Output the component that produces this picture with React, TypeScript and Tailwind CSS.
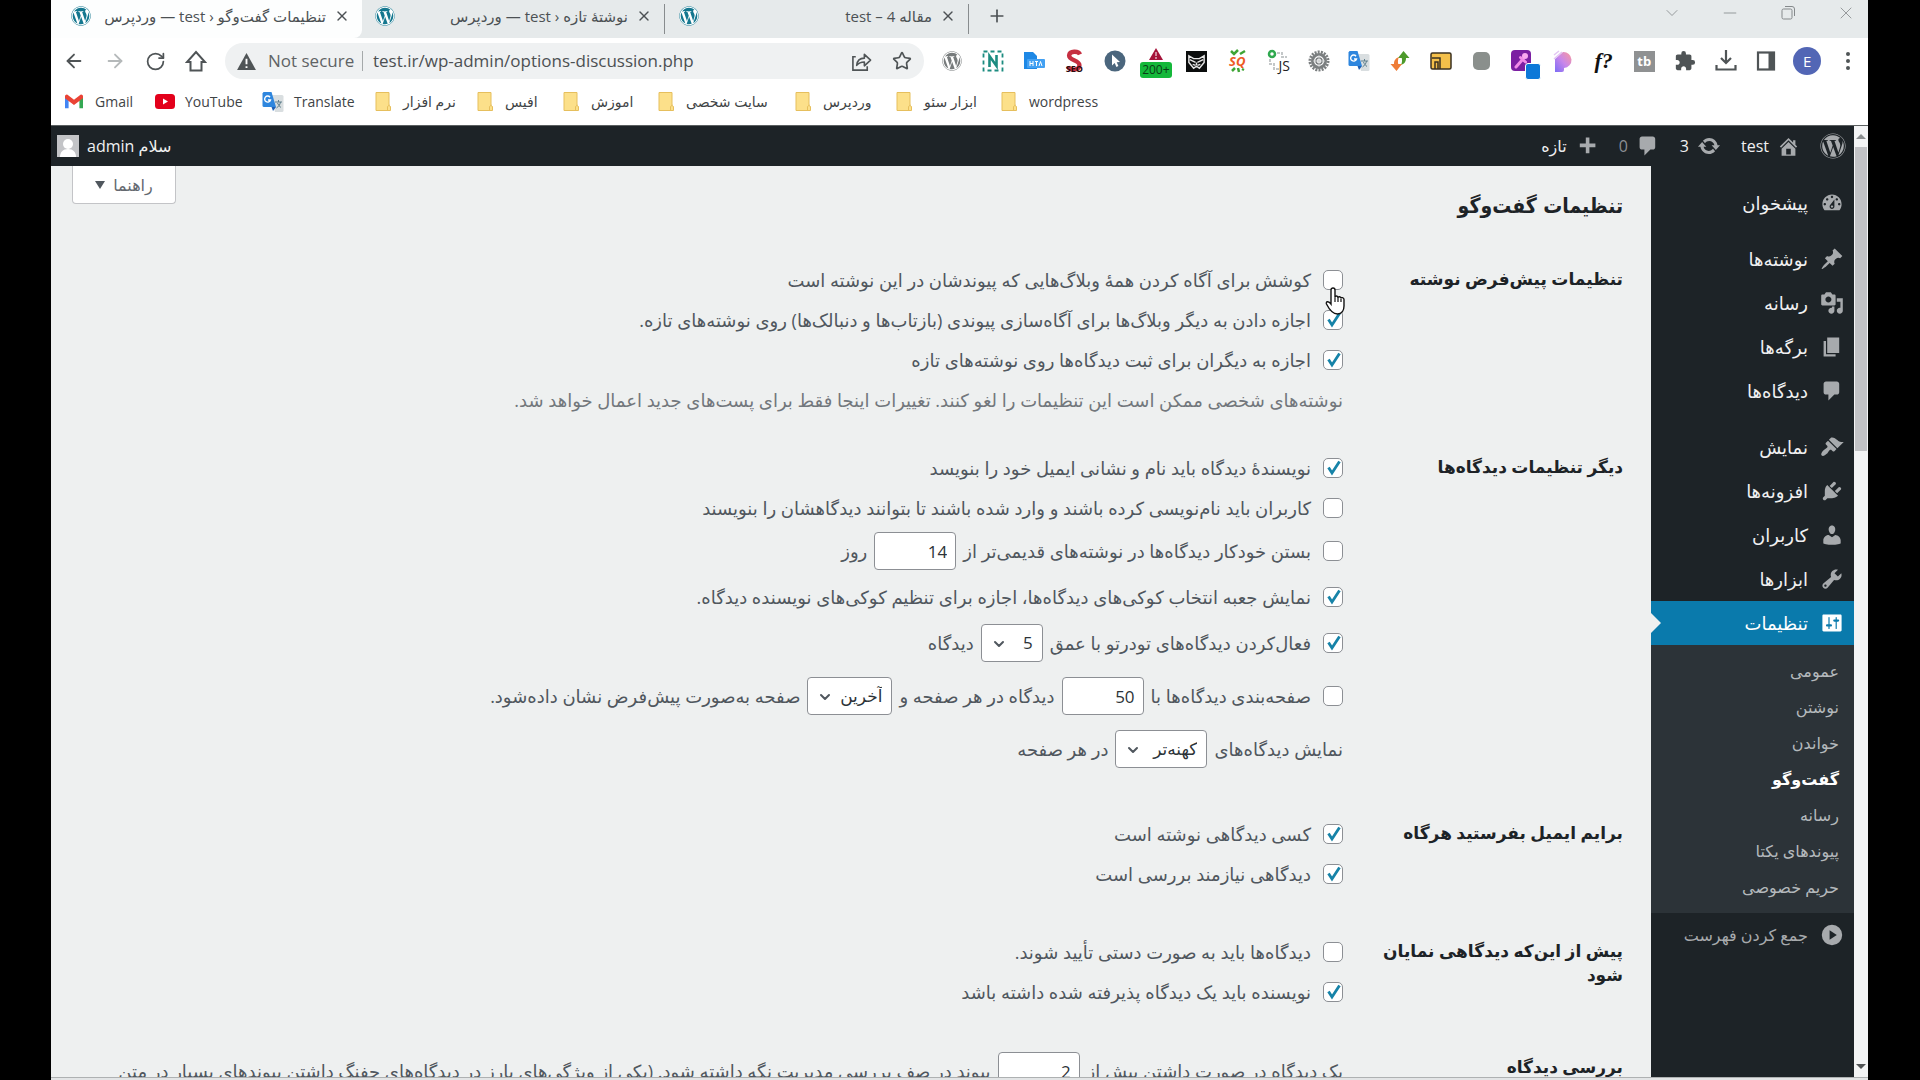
import type { ReactNode } from "react";
import {
  ArrowLeft,
  ArrowRight,
  ChevronDown,
  Minus,
  Plus,
  RotateCw,
  Star,
  X,
} from "lucide-react";
import { FaWordpress } from "react-icons/fa";
import { MdExtension } from "react-icons/md";

const DASHICONS = {
  dashboard:
    "M3.76 16h12.48c1.1-1.37 1.76-3.11 1.76-5 0-4.42-3.58-8-8-8s-8 3.58-8 8c0 1.89.66 3.63 1.76 5zM10 4c.55 0 1 .45 1 1s-.45 1-1 1-1-.45-1-1 .45-1 1-1zM6 6c.55 0 1 .45 1 1s-.45 1-1 1-1-.45-1-1 .45-1 1-1zm8 0c.55 0 1 .45 1 1s-.45 1-1 1-1-.45-1-1 .45-1 1-1zm-5.37 5.55L12 7v6c0 1.1-.9 2-2 2s-2-.9-2-2c0-.57.24-1.08.63-1.45zM4 10c.55 0 1 .45 1 1s-.45 1-1 1-1-.45-1-1 .45-1 1-1zm12 0c.55 0 1 .45 1 1s-.45 1-1 1-1-.45-1-1 .45-1 1-1zm-5 3c0-.55-.45-1-1-1s-1 .45-1 1 .45 1 1 1 1-.45 1-1z",
  post: "M10.44 3.02l1.82-1.82 6.36 6.35-1.83 1.82c-1.05-.68-2.48-.57-3.41.36l-.75.75c-.92.93-1.04 2.35-.35 3.41l-1.83 1.82-2.41-2.41-2.8 2.79c-.42.42-3.38 2.71-3.8 2.29s1.86-3.39 2.28-3.81l2.79-2.79L4.1 9.36l1.83-1.82c1.05.69 2.48.57 3.4-.36l.75-.75c.93-.92 1.05-2.35.36-3.41z",
  media:
    "M13 11V4c0-.55-.45-1-1-1h-1.67L9 1H5L3.67 3H2c-.55 0-1 .45-1 1v7c0 .55.45 1 1 1h10c.55 0 1-.45 1-1zM7 4.5c1.38 0 2.5 1.12 2.5 2.5S8.38 9.5 7 9.5 4.5 8.38 4.5 7 5.62 4.5 7 4.5zM14 6h5v10.5c0 1.38-1.12 2.5-2.5 2.5S14 17.88 14 16.5s1.12-2.5 2.5-2.5c.17 0 .34.02.5.05V9h-3V6zm-4 8.05V13h2v3.5c0 1.38-1.12 2.5-2.5 2.5S7 17.88 7 16.5 8.12 14 9.5 14c.17 0 .34.02.5.05z",
  page: "M6 15V2h10v13H6zm-1 1h8v2H3V5h2v11z",
  comments:
    "M5 2h9c1.1 0 2 .9 2 2v7c0 1.1-.9 2-2 2h-2l-5 5v-5H5c-1.1 0-2-.9-2-2V4c0-1.1.9-2 2-2z",
  appearance:
    "M14.48 11.06L7.41 3.99l1.5-1.5c.5-.56 2.3-.47 3.51.32 1.21.8 1.43 1.28 2.91 2.1 1.18.64 2.45 1.26 4.45.85zm-.71.71L6.7 4.7 4.93 6.47c-.39.39-.39 1.02 0 1.41l1.06 1.06c.39.39.39 1.03 0 1.42-.6.6-1.43 1.11-2.21 1.69-.35.26-.7.53-1.01.84C1.43 14.23.4 16.08 1.4 17.07c.99 1 2.84-.03 4.18-1.36.31-.31.58-.66.85-1.02.57-.78 1.08-1.61 1.69-2.21.39-.39 1.02-.39 1.41 0l1.06 1.06c.39.39 1.02.39 1.41 0z",
  plugins:
    "M13.11 4.36L9.87 7.6 8 5.73l3.24-3.24c.35-.34 1.05-.2 1.56.32.52.51.66 1.21.31 1.55zm-8 1.77l.91-1.12 9.01 9.01-1.19.84c-.71.71-2.63 1.16-3.82 1.16H6.14L4.9 17.26c-.59.59-1.54.59-2.12 0-.59-.58-.59-1.53 0-2.12l1.24-1.24v-3.88c0-1.13.4-3.19 1.09-3.89zm7.26 3.97l3.24-3.24c.34-.35 1.04-.21 1.55.31.52.51.66 1.21.31 1.55l-3.24 3.25z",
  users:
    "M10 9.25c-2.27 0-2.73-3.44-2.73-3.44C7 4.02 7.82 2 9.97 2c2.16 0 2.98 2.02 2.71 3.81 0 0-.41 3.44-2.68 3.44zm0 2.57L12.72 10c2.39 0 4.52 2.33 4.52 4.53v2.49s-3.65 1.13-7.24 1.13c-3.65 0-7.24-1.13-7.24-1.13v-2.49c0-2.25 1.94-4.48 4.47-4.48z",
  tools:
    "M16.68 9.77c-1.34 1.34-3.3 1.67-4.95.99l-5.41 6.52c-.99.99-2.59.99-3.58 0s-.99-2.59 0-3.57l6.52-5.42c-.68-1.65-.35-3.61.99-4.95 1.28-1.28 3.12-1.62 4.72-1.06l-2.89 2.89 2.82 2.82 2.86-2.87c.53 1.58.18 3.39-1.08 4.65zM3.81 16.21c.4.39 1.04.39 1.43 0 .4-.4.4-1.04 0-1.43-.39-.4-1.03-.4-1.43 0-.39.39-.39 1.03 0 1.43z",
  settings:
    "M18 16V4c0-.55-.45-1-1-1H3c-.55 0-1 .45-1 1v12c0 .55.45 1 1 1h14c.55 0 1-.45 1-1zM8 11h1c.55 0 1 .45 1 1s-.45 1-1 1H8v1.5c0 .28-.22.5-.5.5s-.5-.22-.5-.5V13H6c-.55 0-1-.45-1-1s.45-1 1-1h1V5.5c0-.28.22-.5.5-.5s.5.22.5.5V11zm5-2h-1c-.55 0-1-.45-1-1s.45-1 1-1h1V5.5c0-.28.22-.5.5-.5s.5.22.5.5V7h1c.55 0 1 .45 1 1s-.45 1-1 1h-1v5.5c0 .28-.22.5-.5.5s-.5-.22-.5-.5V9z",
  home: "M16 8.5l1.53 1.53-1.06 1.06L10 4.6l-6.47 6.49-1.06-1.06L10 2.5l4 4v-2h2v4zm-6-2.46l6 5.99V18H4v-5.97zM12 17v-5H8v5h4z",
  update:
    "M10.2 3.28c3.53 0 6.43 2.61 6.92 6h2.08l-3.5 4-3.5-4h2.32c-.45-1.97-2.21-3.45-4.32-3.45-1.45 0-2.73.71-3.54 1.78L4.95 5.66C6.23 4.2 8.11 3.28 10.2 3.28zm-.4 13.44c-3.52 0-6.43-2.61-6.92-6H.8l3.5-4c1.17 1.33 2.33 2.67 3.5 4H5.48c.45 1.97 2.21 3.45 4.32 3.45 1.45 0 2.73-.71 3.54-1.78l1.71 1.95c-1.28 1.46-3.15 2.38-5.25 2.38z",
  plus: "M17 8v3h-5v5H9v-5H4V8h5V3h3v5h5z",
  collapse:
    "M10 1.5a8.5 8.5 0 1 0 0 17 8.5 8.5 0 0 0 0-17zM8 6l6 4-6 4z",
};

type DashiconName = keyof typeof DASHICONS;

function Dashicon({ name, className = "size-6" }: { name: DashiconName; className?: string }) {
  return (
    <svg viewBox="0 0 20 20" fill="currentColor" fillRule="evenodd" className={`shrink-0 ${className}`}>
      <path d={DASHICONS[name]} />
    </svg>
  );
}

/* ---------- Browser ---------- */

function WpFavicon() {
  return (
    <span className="flex size-5 shrink-0 items-center justify-center rounded-full bg-white">
      <FaWordpress className="size-5 text-[#14778f]" />
    </span>
  );
}

function TabStrip() {
  return (
    <div className="flex h-[38px] items-stretch bg-[#e6eaeb] text-[15px] text-[#4c5154]">
      <div className="flex w-[311px] items-center rounded-br-lg bg-[#fdfefe] pr-3 pl-5 pb-[6px]">
        <WpFavicon />
        <span dir="rtl" className="flex-1 truncate pr-2 pl-1 text-right">
          تنظیمات گفت‌وگو ‹ test — وردپرس
        </span>
        <button aria-label="Close tab">
          <X className="size-4" />
        </button>
      </div>
      <div className="flex w-[302px] items-center pr-3 pl-[13px] pb-[6px]">
        <WpFavicon />
        <span dir="rtl" className="flex-1 truncate pr-2 pl-1 text-right">
          نوشتهٔ تازه ‹ test — وردپرس
        </span>
        <button aria-label="Close tab">
          <X className="size-4" />
        </button>
      </div>
      <div className="my-1 flex w-[305px] items-center border-x border-[#888c8e] pr-3 pl-[14px] pb-[6px]">
        <WpFavicon />
        <span dir="rtl" className="flex-1 truncate pr-2 pl-1 text-right">
          مقاله 4 – test
        </span>
        <button aria-label="Close tab">
          <X className="size-4" />
        </button>
      </div>
      <button aria-label="New tab" className="ml-[18px] pb-[6px]">
        <Plus className="size-5" />
      </button>
      <div className="ml-auto flex items-center gap-[38px] pr-3 pb-3 text-[#85898b]">
        <button aria-label="Search tabs">
          <ChevronDown className="size-5" strokeWidth={1} />
        </button>
        <button aria-label="Minimize">
          <Minus className="size-5" strokeWidth={1} />
        </button>
        <button aria-label="Restore">
          <svg viewBox="0 0 20 20" className="size-5" fill="none" stroke="currentColor">
            <rect x="4" y="6" width="10" height="10" rx="1.500" />
            <path d="M7 3.500h7a2.500 2.500 0 0 1 2.500 2.500v7" />
          </svg>
        </button>
        <button aria-label="Close">
          <X className="size-5" strokeWidth={1} />
        </button>
      </div>
    </div>
  );
}

function TranslateIcon() {
  return (
    <svg viewBox="0 0 22 22" className="size-[22px] shrink-0">
      <path d="M9 4h11a1.500 1.500 0 0 1 1.500 1.500v14A1.500 1.500 0 0 1 20 21h-7z" fill="#d9dee0" />
      <path d="M13 11h7m-3.500-2v2m2 0c-.5 3-2 4.500-4 6m1-5c.7 2 2 3.500 3.500 4.500" stroke="#5f7f8c" fill="none" />
      <path d="M1.500 1h8l4.500 15H2A1.500 1.500 0 0 1 .5 14.500V2.500z" fill="#2e86de" />
      <path d="M9.500 16H14l-3 4z" fill="#1d5fb5" />
      <path d="M8 6.200A3 3 0 1 0 8.500 9H6" fill="none" stroke="#fff" strokeWidth="1.400" />
    </svg>
  );
}

const EXTENSIONS: { name: string; icon: ReactNode }[] = [
  { name: "WordPress", icon: <FaWordpress className="size-5 text-[#777b7c]" /> },
  {
    name: "Notes",
    icon: (
      <svg viewBox="0 0 22 22" className="size-[22px]" fill="none" stroke="#1c8c80">
        <rect x="1.500" y="1.500" width="19" height="19" strokeWidth="1.800" strokeDasharray="4 3" />
        <path d="M7.500 17V6l7 10V5" strokeWidth="2.600" />
      </svg>
    ),
  },
  {
    name: "Tags",
    icon: (
      <svg viewBox="0 0 22 22" className="size-[22px]">
        <path d="M1 2h9l4 4v13H1z" fill="#1e88e5" />
        <rect x="4" y="9" width="18" height="9" rx="1" fill="#42a0f2" />
        <path d="M7 11v5m0-2.500h3M10 11v5M12 11.500h3m-1.500 0V16M16 16l1.500-4.500L19 16" stroke="#fff" fill="none" />
      </svg>
    ),
  },
  {
    name: "SEO",
    icon: (
      <span className="relative flex size-6 justify-center">
        <svg viewBox="0 0 22 22" className="size-6">
          <path d="M16.500 5C15 1.500 7 1.500 6.500 6c0 5 9.500 3.500 9.500 9 0 5-9 5-10.500 1" fill="none" stroke="#c62f41" strokeWidth="4" />
        </svg>
        <b className="absolute bottom-0 text-[9px] leading-none text-[#2a0b0e]">SEO</b>
      </span>
    ),
  },
  {
    name: "Pointer",
    icon: (
      <svg viewBox="0 0 22 22" className="size-[22px]">
        <circle cx="11" cy="11" r="10.500" fill="#4b667d" />
        <path d="M8 4.500v11l2.700-2.500 1.700 4 2-1-1.700-3.700 3.300-.3z" fill="#fff" />
      </svg>
    ),
  },
  {
    name: "Site audit",
    icon: (
      <span className="relative flex size-[34px] flex-col items-center pt-1">
        <svg viewBox="0 0 14 12" className="h-3 w-[14px]">
          <path d="M7 0l7 12H0z" fill="#a5133a" />
          <path d="M7 4v4m0 1v2" stroke="#fff" />
        </svg>
        <span className="mt-[2px] rounded-[3px] bg-[#14b83a] px-[2px] text-[12px] leading-4 text-[#0a3d17]">200+</span>
      </span>
    ),
  },
  {
    name: "Owl",
    icon: (
      <svg viewBox="0 0 22 22" className="size-[21px]">
        <rect width="22" height="22" fill="#0b0d0d" />
        <path d="M3 5l5 3h6l5-3v7l-5 6-3-2-3 2-5-6z" fill="none" stroke="#e6e6e6" strokeWidth="1.500" />
        <path d="M4 9l6 3m8-3l-6 3m-1 0v3M7 14l3 1m5-1l-3 1" stroke="#e6e6e6" strokeWidth="1.500" />
      </svg>
    ),
  },
  {
    name: "SQ",
    icon: (
      <span className="relative flex size-6 items-center justify-center">
        <svg viewBox="0 0 24 24" className="absolute size-6" stroke="#3fa535" strokeWidth="2.500" fill="none">
          <path d="M6 2l3 3 4-4M15 5l5-3M7 22l3-3m4 4l-1-4m4 1l2 1" />
        </svg>
        <b className="relative text-[13px] leading-none text-[#ee5a24] italic">SQ</b>
      </span>
    ),
  },
  {
    name: "JS",
    icon: (
      <span className="relative flex size-6">
        <svg viewBox="0 0 24 24" className="size-6" fill="none">
          <path d="M11 4h5v4h5M4 10v5h4v5h5" stroke="#c3c7c8" strokeWidth="2" strokeDasharray="3 1" />
          <circle cx="6" cy="5" r="3" stroke="#2fa84f" strokeWidth="2.500" />
        </svg>
        <span className="absolute right-0 bottom-0 text-[14px] leading-none text-[#222]">JS</span>
      </span>
    ),
  },
  {
    name: "Options",
    icon: (
      <svg viewBox="0 0 22 22" className="size-[22px]" fill="none" stroke="#7b7f80">
        <circle cx="11" cy="11" r="9" strokeWidth="3" strokeDasharray="2 1.140" />
        <circle cx="11" cy="11" r="6.500" strokeWidth="3" />
        <circle cx="11" cy="11" r="3" strokeWidth="1.500" />
        <path d="M11 5v12M5 11h12" stroke="#c4c7c8" />
      </svg>
    ),
  },
  { name: "Translate", icon: <TranslateIcon /> },
  {
    name: "Transfer",
    icon: (
      <svg viewBox="0 0 22 22" className="size-[22px]">
        <path d="M14.500 1l6 7h-3.500c0 4-2 6-5 7 1-2 1.300-4 .8-7H9z" fill="#4d9a2b" />
        <path d="M7.500 21l-6-7H5c0-4 2-6 5-7-1 2-1.300 4-.8 7h3.800z" fill="#ef7d38" />
      </svg>
    ),
  },
  {
    name: "Scrapbook",
    icon: (
      <svg viewBox="0 0 22 22" className="size-[22px]" stroke="#3a3020" strokeWidth="1.500">
        <rect x="1" y="3" width="20" height="16" rx="1.500" fill="#f4c04a" />
        <path d="M2 8h8v11M5 19v-7h3v7" fill="none" />
      </svg>
    ),
  },
  { name: "Disabled", icon: <span className="h-[18px] w-[17px] rounded-[5px] bg-[#8a8f8c]" /> },
  {
    name: "Picker",
    icon: (
      <span className="relative flex size-[22px]">
        <svg viewBox="0 0 22 22" className="size-[22px]">
          <rect width="20" height="21" rx="4" fill="#7b1fa2" />
          <path d="M5 17l7-8M9.500 7.500l5 4.500" stroke="#f18be8" strokeWidth="3" strokeLinecap="round" />
          <circle cx="14" cy="6" r="3" fill="#f9a8ef" />
        </svg>
        <span className="absolute -right-2 -bottom-2 h-[17px] w-4 rounded-[3px] border border-white bg-[#0d78d8]" />
      </span>
    ),
  },
  {
    name: "Pastel",
    icon: (
      <svg viewBox="0 0 20 22" className="h-[22px] w-5">
        <defs>
          <linearGradient id="pastel" x1="0" y1="1" x2="1" y2="0">
            <stop offset="0" stopColor="#7b6cf6" />
            <stop offset=".5" stopColor="#c987ea" />
            <stop offset="1" stopColor="#fb9a9a" />
          </linearGradient>
        </defs>
        <path d="M2 9L10 2a8 8 0 1 1 1 16v2a2 2 0 0 1-2 2H2z" fill="url(#pastel)" />
        <path d="M1 5l5-4M1 9l8-7" stroke="#e3c6f3" strokeWidth="1.500" />
      </svg>
    ),
  },
  {
    name: "Font finder",
    icon: <span className="font-['Liberation_Serif',serif] text-[22px] leading-none font-bold text-[#111] italic">f?</span>,
  },
  {
    name: "TubeBuddy",
    icon: (
      <span className="flex size-[21px] items-center justify-center bg-[#8f9192] text-[13px] leading-none font-bold text-white">
        tb
      </span>
    ),
  },
  { name: "Extensions", icon: <MdExtension className="size-[22px] text-[#4f5456]" /> },
  {
    name: "Downloads",
    icon: (
      <svg viewBox="0 0 22 22" className="size-[22px]" fill="none" stroke="#4f5456" strokeWidth="2.200">
        <path d="M11 0v12M6 8l5 5 5-5M1.500 15v4.500h19V15" />
      </svg>
    ),
  },
  {
    name: "Side panel",
    icon: (
      <svg viewBox="0 0 20 20" className="size-5" fill="none" stroke="#4f5456" strokeWidth="2.200">
        <rect x="2" y="1.500" width="16" height="17" />
        <path d="M15 2v16" strokeWidth="5" />
      </svg>
    ),
  },
  {
    name: "Profile",
    icon: (
      <span className="flex size-7 items-center justify-center rounded-full bg-[#5266b5] text-[15px] text-white">E</span>
    ),
  },
  {
    name: "Menu",
    icon: (
      <svg viewBox="0 0 20 20" className="size-5 text-[#4f5456]" fill="currentColor">
        <circle cx="10" cy="3" r="2" />
        <circle cx="10" cy="10" r="2" />
        <circle cx="10" cy="17" r="2" />
      </svg>
    ),
  },
];

function Toolbar() {
  return (
    <div className="flex h-[46px] items-center bg-white text-[#4f5456]">
      <div className="flex w-[174px] items-center gap-[19px] pl-3">
        <button aria-label="Back">
          <ArrowLeft className="size-[22px]" />
        </button>
        <button aria-label="Forward" className="text-[#b5b9ba]">
          <ArrowRight className="size-[22px]" />
        </button>
        <button aria-label="Reload">
          <RotateCw className="size-[21px]" />
        </button>
        <button aria-label="Home">
          <svg viewBox="0 0 22 22" className="size-[22px]" fill="none" stroke="currentColor" strokeWidth="2">
            <path d="M5.500 20.500V12H2l9-10 9 10h-3.500v8.500z" />
          </svg>
        </button>
      </div>
      <div className="flex h-9 flex-1 items-center rounded-full bg-[#eff1f2] pr-3 pl-3">
        <svg viewBox="0 0 20 18" className="h-[17px] w-[19px] shrink-0">
          <path d="M10 0l10 18H0z" fill="#4f5456" />
          <path d="M10 6v6m0 2v2" stroke="#fff" strokeWidth="2" />
        </svg>
        <span className="ml-3 w-[84px] text-[17px] whitespace-nowrap text-[#5f6365]">Not secure</span>
        <span className="mx-[10px] h-5 w-px bg-[#a5a9aa]" />
        <input
          aria-label="Address"
          dir="ltr"
          defaultValue="test.ir/wp-admin/options-discussion.php"
          className="min-w-0 flex-1 bg-transparent text-[17px] text-[#4c5052] outline-none"
        />
        <button aria-label="Share">
          <svg viewBox="0 0 22 22" className="mr-5 size-[21px]" fill="none" stroke="currentColor" strokeWidth="1.700">
            <path d="M5 6H2v14h15v-4" />
            <path d="M6 15c.5-5 3-7.500 8-7.500V3.500l6.500 6-6.500 6v-4c-4 0-6 1-8 3.500z" strokeLinejoin="round" />
          </svg>
        </button>
        <button aria-label="Bookmark this page">
          <Star className="size-5" />
        </button>
      </div>
      <div className="ml-2 flex w-[936px] items-center">
        {EXTENSIONS.map((ext) => (
          <button key={ext.name} aria-label={ext.name} className="flex h-9 flex-1 items-center justify-center">
            {ext.icon}
          </button>
        ))}
      </div>
    </div>
  );
}

function FolderIcon() {
  return (
    <svg viewBox="0 0 16 19" className="h-[19px] w-4 shrink-0">
      <path d="M1 .5h13v13l1.500 1v4H1z" fill="#fce08a" stroke="#e6bf5d" />
      <path d="M12.500 18.500v-4l2-1.500" fill="none" stroke="#e6bf5d" />
    </svg>
  );
}

const FOLDERS = [
  { label: "نرم افزار", className: "w-[102px]" },
  { label: "افیس", className: "w-[86px]" },
  { label: "اموزش", className: "w-[95px]" },
  { label: "سایت شخصی", className: "w-[137px]" },
  { label: "وردپرس", className: "w-[101px]" },
  { label: "ابزار سئو", className: "w-[105px]" },
  { label: "wordpress", className: "w-[110px]" },
];

function BookmarksBar() {
  return (
    <div className="flex h-[41px] items-center bg-white pb-[6px] pl-[14px] text-[14px] whitespace-nowrap text-[#3f4446]">
      <a href="#gmail" className="flex w-[90px] items-center gap-3">
        <svg viewBox="0 0 20 15" className="h-[15px] w-[18px] shrink-0">
          <path d="M0 2v13h4V6z" fill="#4285f4" />
          <path d="M20 2v13h-4V6z" fill="#34a853" />
          <path d="M0 2a2 2 0 0 1 3.500-1.500L10 5.500l6.500-5A2 2 0 0 1 20 2v2l-10 7.500L0 4z" fill="#ea4335" />
        </svg>
        Gmail
      </a>
      <a href="#youtube" className="flex w-[107px] items-center gap-[10px]">
        <svg viewBox="0 0 20 15" className="h-[15px] w-5 shrink-0">
          <rect width="20" height="15" rx="3.500" fill="#e3001b" />
          <path d="M8 4.500v6l5-3z" fill="#fff" />
        </svg>
        YouTube
      </a>
      <a href="#translate" className="flex w-[113px] items-center gap-[10px]">
        <TranslateIcon />
        Translate
      </a>
      {FOLDERS.map((folder) => (
        <button key={folder.label} className={`flex items-center gap-3 ${folder.className}`}>
          <FolderIcon />
          {folder.label}
        </button>
      ))}
    </div>
  );
}

/* ---------- Admin ---------- */

function AdminBar() {
  return (
    <header className="flex h-10 items-center bg-[#1d2327] pr-2 pl-[6px] text-[16px] text-[#f0f0f1]">
      <a href="#wordpress" aria-label="WordPress" className="text-[#a7aaad]">
        <FaWordpress className="size-[26px]" />
      </a>
      <a href="#site" className="mr-5 flex items-center gap-2">
        <Dashicon name="home" className="size-[23px] text-[#a7aaad]" />
        test
      </a>
      <a href="#updates" className="mr-5 flex items-center gap-2">
        <Dashicon name="update" className="size-6 text-[#a7aaad]" />3
      </a>
      <a href="#comments" className="mr-5 flex items-center gap-2 text-[#8c8f94]">
        <Dashicon name="comments" className="size-6 text-[#a7aaad]" />0
      </a>
      <a href="#new" className="mr-5 flex items-center gap-2">
        <Dashicon name="plus" className="size-6 text-[#a7aaad]" />
        تازه
      </a>
      <a href="#profile" className="mr-auto flex items-center gap-2">
        سلام admin
        <svg viewBox="0 0 22 22" className="size-[22px]">
          <rect width="22" height="22" fill="#c3c4c7" />
          <circle cx="11" cy="9" r="5" fill="#fff" />
          <path d="M3 22c0-5 3-8 8-8s8 3 8 8z" fill="#fff" />
        </svg>
      </a>
    </header>
  );
}

const MENU_GROUPS: { icon: DashiconName; label: string }[][] = [
  [{ icon: "dashboard", label: "پیشخوان" }],
  [
    { icon: "post", label: "نوشته‌ها" },
    { icon: "media", label: "رسانه" },
    { icon: "page", label: "برگه‌ها" },
    { icon: "comments", label: "دیدگاه‌ها" },
  ],
  [
    { icon: "appearance", label: "نمایش" },
    { icon: "plugins", label: "افزونه‌ها" },
    { icon: "users", label: "کاربران" },
    { icon: "tools", label: "ابزارها" },
  ],
];

const SUBMENU = ["عمومی", "نوشتن", "خواندن", "گفت‌وگو", "رسانه", "پیوندهای یکتا", "حریم خصوصی"];

function Sidebar() {
  return (
    <nav className="w-[203px] shrink-0 bg-[#1d2327] pt-[15px] text-[18px] text-[#f0f0f1]">
      <div className="flex flex-col gap-3">
        {MENU_GROUPS.map((group) => (
          <ul key={group[0].label}>
            {group.map((item) => (
              <li key={item.label}>
                <a href={`#${item.icon}`} className="flex h-11 items-center gap-3 pr-[10px]">
                  <Dashicon name={item.icon} className="size-6 text-[#a7aaad]" />
                  {item.label}
                </a>
              </li>
            ))}
          </ul>
        ))}
      </div>
      <a href="#settings" className="relative flex h-11 items-center gap-3 bg-[#0a7aac] pr-[10px] text-white">
        <Dashicon name="settings" />
        تنظیمات
        <span className="absolute top-3 left-0 border-y-10 border-l-10 border-y-transparent border-l-[#eef0f0]" />
      </a>
      <ul className="bg-[#2c3338] py-2 text-[16px] text-[#b4b9bc]">
        {SUBMENU.map((label) => (
          <li key={label}>
            <a
              href={`#${label}`}
              className={`flex h-9 items-center pr-[15px] ${label === "گفت‌وگو" ? "font-bold text-white" : ""}`}
            >
              {label}
            </a>
          </li>
        ))}
      </ul>
      <button className="flex h-11 items-center gap-3 pr-[10px] text-[16px] text-[#a7aaad]">
        <Dashicon name="collapse" />
        جمع کردن فهرست
      </button>
    </nav>
  );
}

function Check({ checked, children }: { checked?: boolean; children: ReactNode }) {
  return (
    <label className="flex items-center gap-3">
      <span className="relative flex size-5 shrink-0">
        <input
          type="checkbox"
          defaultChecked={checked}
          className="peer size-5 appearance-none rounded-[5px] border border-[#8c8f94] bg-white"
        />
        <svg
          viewBox="0 0 20 20"
          className="pointer-events-none absolute inset-0 hidden size-5 text-[#1683a8] peer-checked:block"
        >
          <path d="M5.500 9.500l3.500 5.500 7.500-11.500" fill="none" stroke="currentColor" strokeWidth="2.800" />
        </svg>
      </span>
      {children}
    </label>
  );
}

function NumberBox({ value, label }: { value: string; label: string }) {
  return (
    <input
      aria-label={label}
      defaultValue={value}
      className="h-[38px] w-[82px] rounded-[4px] border border-[#8c8f94] bg-white px-2 text-[17px] text-[#2c3338]"
    />
  );
}

function Select({ value, label, className }: { value: string; label: string; className: string }) {
  return (
    <span className={`relative flex h-[38px] ${className}`}>
      <select
        aria-label={label}
        className="w-full appearance-none rounded-[4px] border border-[#8c8f94] bg-white pr-[9px] text-[17px] text-[#2c3338]"
      >
        <option>{value}</option>
      </select>
      <ChevronDown className="pointer-events-none absolute top-3 left-[10px] size-4 text-[#50575e]" strokeWidth={3} />
    </span>
  );
}

function Row({ className = "h-10", children }: { className?: string; children: ReactNode }) {
  return <div className={`flex items-center gap-[7px] whitespace-nowrap ${className}`}>{children}</div>;
}

function Section({ title, className, children }: { title: string; className?: string; children: ReactNode }) {
  return (
    <section className={`flex ${className}`}>
      <h2 className="w-[280px] shrink-0 pt-[7px] pl-[26px] text-[17px] leading-6 font-bold text-[#1d2327]">{title}</h2>
      <div className="min-w-0 flex-1">{children}</div>
    </section>
  );
}

function Settings() {
  return (
    <main className="relative min-w-0 flex-1 overflow-hidden bg-[#eef0f0] pr-7 text-[18px] text-[#50575e]">
      <button className="absolute top-0 left-[21px] flex h-[38px] w-[104px] items-center justify-center gap-2 rounded-b-[4px] border border-t-0 border-[#c3c4c7] bg-white text-[16px] text-[#646970]">
        راهنما
        <span className="border-x-5 border-t-8 border-x-transparent border-t-[#50575e]" />
      </button>
      <h1 className="pt-5 font-['DejaVu_Sans_Condensed','DejaVu_Sans',sans-serif] text-[21px] leading-10 font-bold text-[#1d2327]">
        تنظیمات گفت‌وگو
      </h1>

      <Section title="تنظیمات پیش‌فرض نوشته" className="mt-[34px]">
        <Row>
          <Check>کوشش برای آگاه کردن همهٔ وبلاگ‌هایی که پیوندشان در این نوشته است</Check>
        </Row>
        <Row>
          <Check checked>
            اجازه دادن به دیگر وبلاگ‌ها برای آگاه‌سازی پیوندی (بازتاب‌ها و دنبالک‌ها) روی نوشته‌های تازه.
          </Check>
        </Row>
        <Row>
          <Check checked>اجازه به دیگران برای ثبت دیدگاه‌ها روی نوشته‌های تازه</Check>
        </Row>
        <Row className="h-10 text-[#72777c]">
          نوشته‌های شخصی ممکن است این تنظیمات را لغو کنند. تغییرات اینجا فقط برای پست‌های جدید اعمال خواهد شد.
        </Row>
      </Section>

      <Section title="دیگر تنظیمات دیدگاه‌ها" className="mt-7">
        <Row>
          <Check checked>نویسندهٔ دیدگاه باید نام و نشانی ایمیل خود را بنویسد</Check>
        </Row>
        <Row>
          <Check>کاربران باید نام‌نویسی کرده باشند و وارد شده باشند تا بتوانند دیدگاهشان را بنویسند</Check>
        </Row>
        <Row className="h-[46px]">
          <Check>بستن خودکار دیدگاه‌ها در نوشته‌های قدیمی‌تر از</Check>
          <NumberBox label="روز" value="14" />
          روز
        </Row>
        <Row className="h-[46px]">
          <Check checked>نمایش جعبه انتخاب کوکی‌های دیدگاه‌ها، اجازه برای تنظیم کوکی‌های نویسنده دیدگاه.</Check>
        </Row>
        <Row className="h-[46px]">
          <Check checked>فعال‌کردن دیدگاه‌های تودرتو با عمق</Check>
          <Select label="عمق" value="5" className="w-[62px]" />
          دیدگاه
        </Row>
        <Row className="h-[60px]">
          <Check>صفحه‌بندی دیدگاه‌ها با</Check>
          <NumberBox label="دیدگاه در هر صفحه" value="50" />
          دیدگاه در هر صفحه و
          <Select label="صفحه پیش‌فرض" value="آخرین" className="w-[85px]" />
          صفحه به‌صورت پیش‌فرض نشان داده‌شود.
        </Row>
        <Row className="h-[46px]">
          نمایش دیدگاه‌های
          <Select label="ترتیب دیدگاه‌ها" value="کهنه‌تر" className="w-[92px]" />
          در هر صفحه
        </Row>
      </Section>

      <Section title="برایم ایمیل بفرستید هرگاه" className="mt-[42px]">
        <Row>
          <Check checked>کسی دیدگاهی نوشته است</Check>
        </Row>
        <Row>
          <Check checked>دیدگاهی نیازمند بررسی است</Check>
        </Row>
      </Section>

      <Section title="پیش از این‌که دیدگاهی نمایان شود" className="mt-[38px]">
        <Row>
          <Check>دیدگاه‌ها باید به صورت دستی تأیید شوند.</Check>
        </Row>
        <Row>
          <Check checked>نویسنده باید یک دیدگاه پذیرفته شده داشته باشد</Check>
        </Row>
      </Section>

      <Section title="بررسی دیدگاه" className="mt-9">
        <Row className="h-[46px]">
          یک دیدگاه در صورت داشتن بیش از
          <NumberBox label="تعداد پیوند" value="2" />
          پیوند در صف بررسی مدیریت نگه داشته شود. (یکی از ویژگی‌های بارز در دیدگاه‌های جفنگ داشتن پیوندهای بسیار در متن
        </Row>
      </Section>
    </main>
  );
}

function Scrollbar() {
  return (
    <div className="flex w-[14px] shrink-0 flex-col items-center bg-[#f3f4f5] py-2">
      <span className="border-x-5 border-b-5 border-x-transparent border-b-[#8a8d8f]" />
      <span className="mt-2 h-[304px] w-3 bg-[#c1c2c5]" />
      <span className="mt-auto border-x-5 border-t-5 border-x-transparent border-t-[#505355]" />
    </div>
  );
}

function HandCursor() {
  return (
    <svg viewBox="0 0 20 28" className="pointer-events-none absolute top-[287px] left-[1325px] h-7 w-5">
      <path
        d="M6 15V3a2 2 0 0 1 4 0v7.500c0-2 3-2 3 .5 0-2 3-1.500 3 .5 0-1.500 3-1 3 1V19c0 4-2 8-6.500 8C7 27 4 22 1.500 17c-1-2.500 2-3.500 4.500 0z"
        fill="#fff"
        stroke="#111"
        strokeWidth="1.400"
      />
      <path d="M10 10.500V15M13 11v4M16 12v3" stroke="#111" strokeWidth="1.200" />
    </svg>
  );
}

export default function App() {
  return (
    <div className="relative h-screen overflow-hidden bg-black pr-[52px] pl-[51px] font-['Open_Sans','DejaVu_Sans',sans-serif]">
      <div className="flex h-full flex-col">
        <TabStrip />
        <Toolbar />
        <BookmarksBar />
        <div className="flex min-h-0 flex-1 border-t border-[#5a5f60]">
          <div dir="rtl" className="flex min-w-0 flex-1 flex-col">
            <AdminBar />
            <div className="flex min-h-0 flex-1">
              <Sidebar />
              <Settings />
            </div>
          </div>
          <Scrollbar />
        </div>
        <div className="h-[3px] shrink-0 border-t border-[#aeb1b2] bg-[#e3e5e6]" />
      </div>
      <HandCursor />
    </div>
  );
}
